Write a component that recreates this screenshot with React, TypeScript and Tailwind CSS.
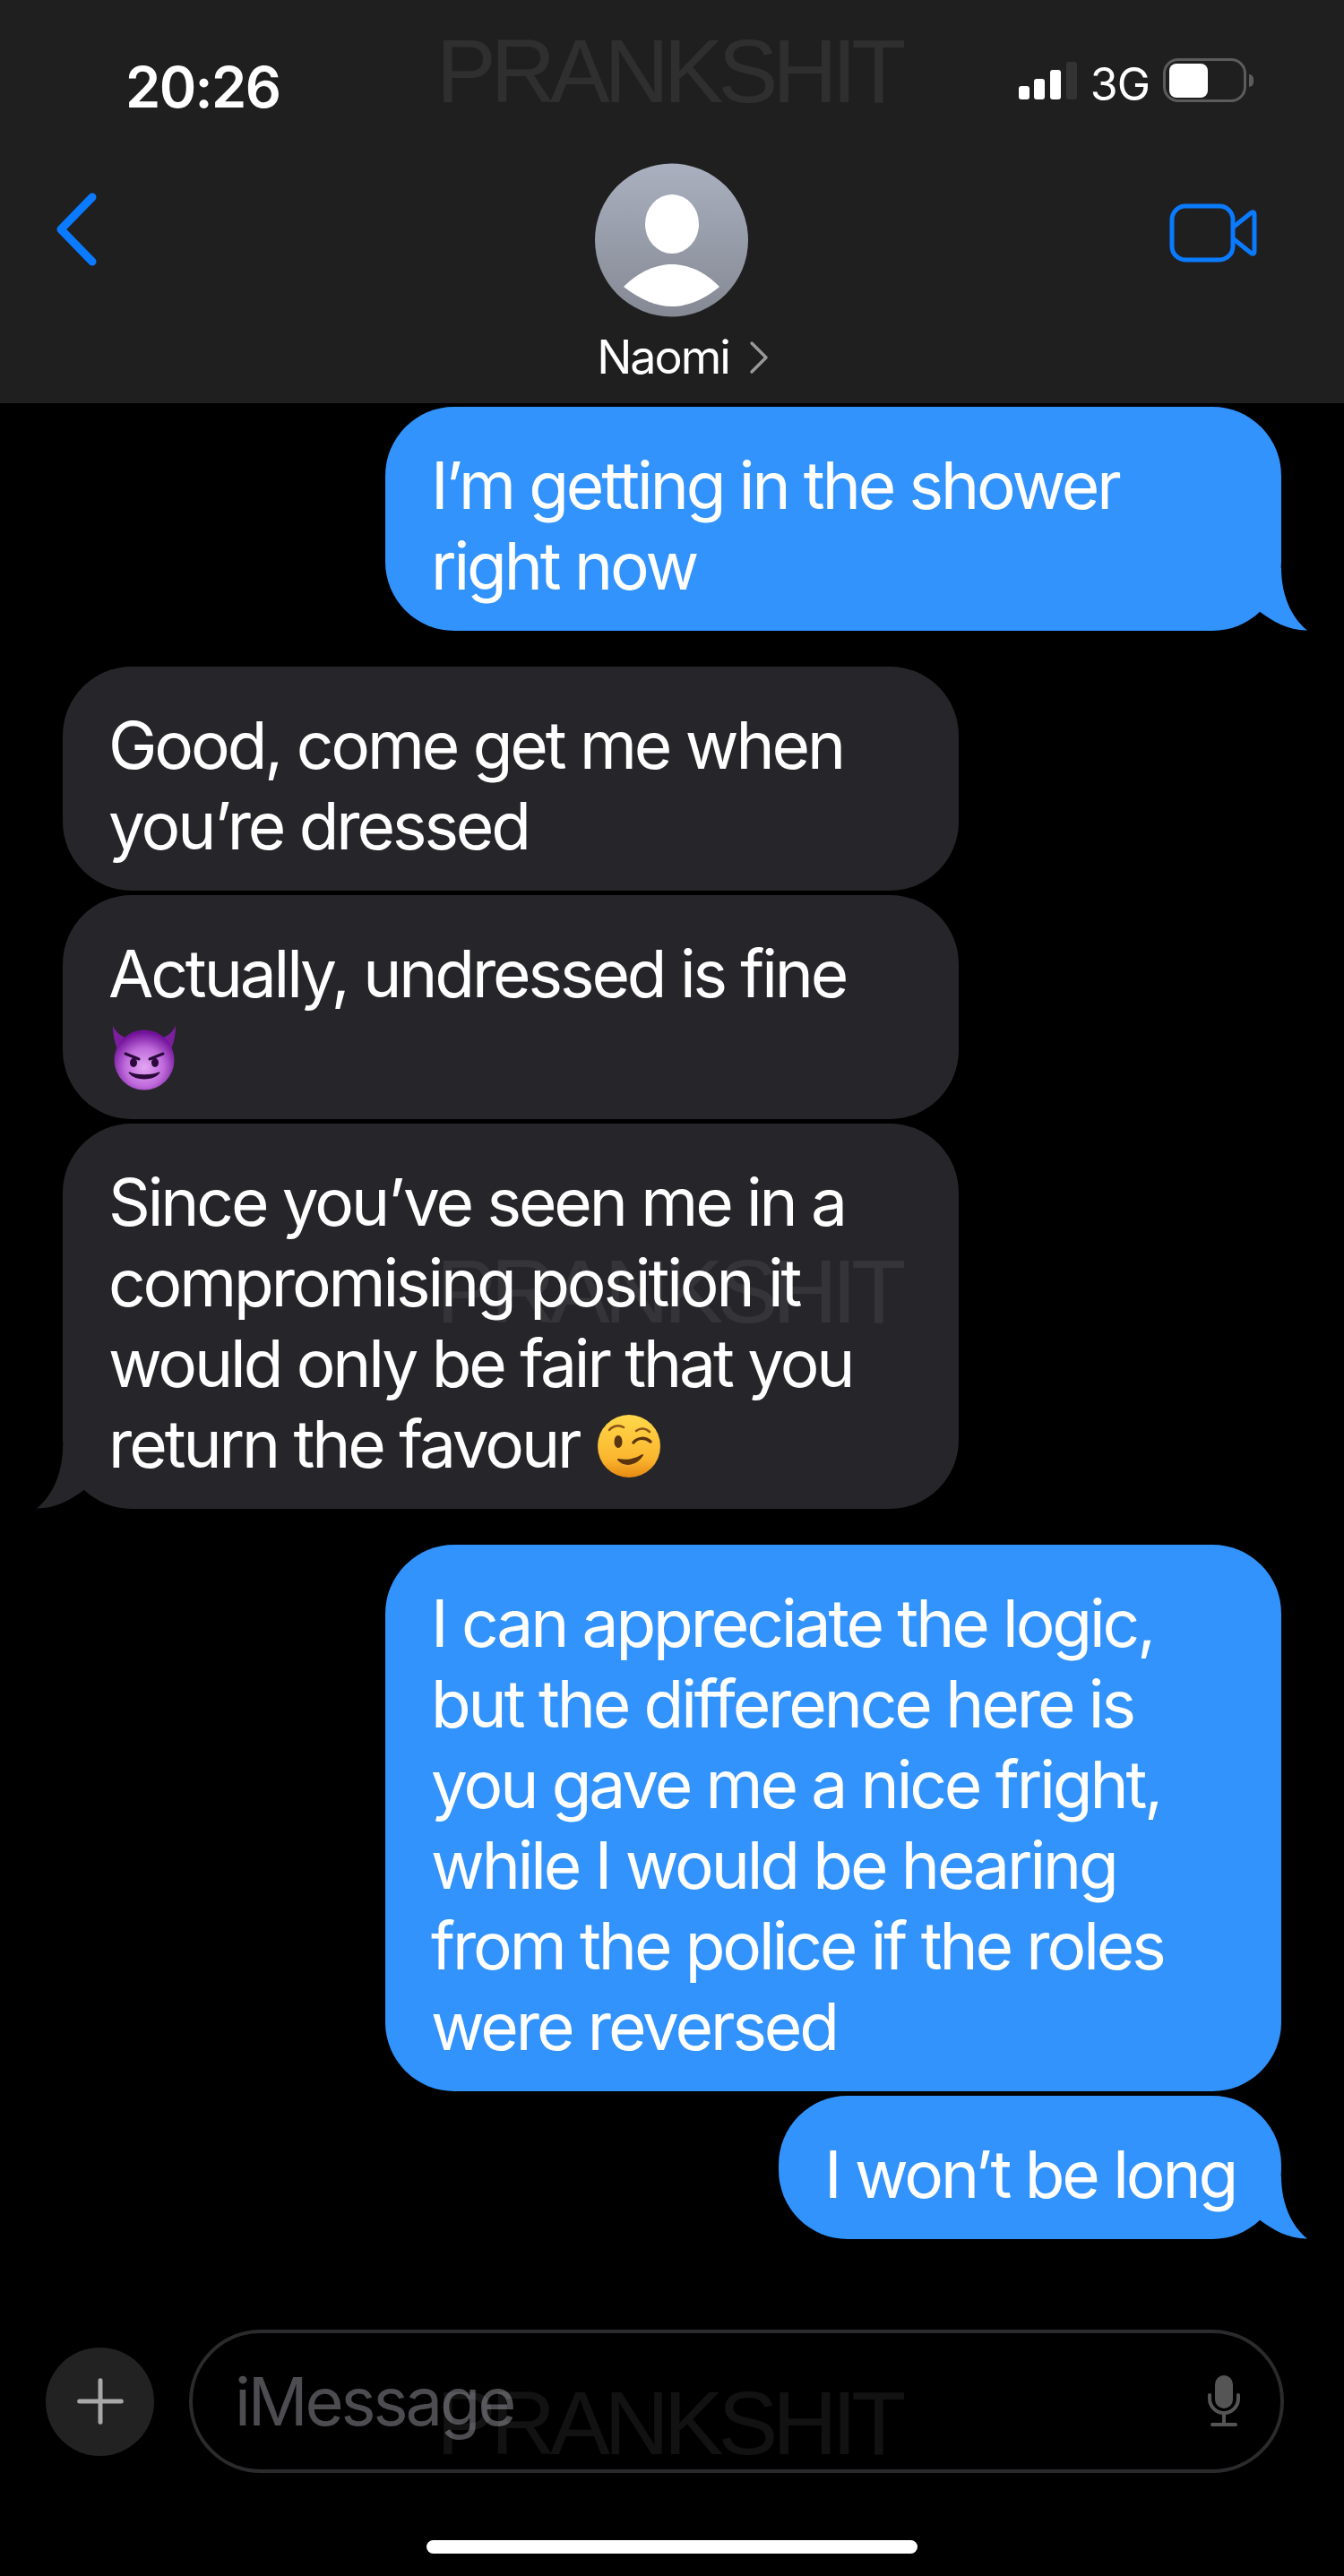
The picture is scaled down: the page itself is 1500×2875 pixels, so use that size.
import type { ReactNode } from 'react';
import { Plus } from 'lucide-react';

const DevilEmoji = () => (
  <svg viewBox="0 0 72 72" className="ml-[4px] inline-block h-[72px] w-[72px] align-[-14px]" aria-hidden="true">
    <defs>
      <radialGradient id="devilFace" cx="50%" cy="62%" r="58%">
        <stop offset="0%" stopColor="#e2a6f2" />
        <stop offset="55%" stopColor="#c06bdc" />
        <stop offset="100%" stopColor="#72129a" />
      </radialGradient>
    </defs>
    <path d="M1 0 C6 10 14 14 22 14 L8 30 C3 20 1 10 1 0 Z" fill="#7c1f9e" />
    <path d="M71 0 C66 10 58 14 50 14 L64 30 C69 20 71 10 71 0 Z" fill="#7c1f9e" />
    <circle cx="36" cy="38" r="33.5" fill="url(#devilFace)" />
    <path d="M15 31 L30 37 M57 31 L42 37" stroke="#2a0a3a" strokeWidth="3" strokeLinecap="round" />
    <ellipse cx="24" cy="41" rx="4" ry="5" fill="#2a0a3a" />
    <ellipse cx="48" cy="41" rx="4" ry="5" fill="#2a0a3a" />
    <path d="M19 52 C27 61 45 61 53 52 C45 56 27 56 19 52 Z" fill="#2a0a3a" stroke="#2a0a3a" strokeWidth="1.5" />
  </svg>
);

const WinkEmoji = () => (
  <svg viewBox="0 0 72 72" className="ml-[2px] inline-block h-[72px] w-[72px] align-[-12px]" aria-hidden="true">
    <defs>
      <linearGradient id="winkFace" x1="0" y1="0" x2="0" y2="1">
        <stop offset="0%" stopColor="#ffd84a" />
        <stop offset="70%" stopColor="#fbb62e" />
        <stop offset="100%" stopColor="#e58a12" />
      </linearGradient>
    </defs>
    <circle cx="36" cy="36" r="35" fill="url(#winkFace)" />
    <ellipse cx="24" cy="31" rx="4.5" ry="7" fill="#5a3310" />
    <path d="M14 18 C18 13 25 12 30 15" fill="none" stroke="#8a5518" strokeWidth="2.5" strokeLinecap="round" />
    <path d="M41 32 C46 26 54 26 60 31" fill="none" stroke="#5a3310" strokeWidth="3.5" strokeLinecap="round" />
    <path d="M44 19 C49 15 55 16 59 20" fill="none" stroke="#8a5518" strokeWidth="2.5" strokeLinecap="round" />
    <path d="M24 51 C32 59 44 57 51 46 C44 51 33 53 24 51 Z" fill="#5a3310" stroke="#5a3310" strokeWidth="2" strokeLinejoin="round" />
  </svg>
);

const SentTail = () => (
  <svg viewBox="0 0 110 70" className="absolute right-[-29px] bottom-0 h-[70px] w-[110px]" aria-hidden="true">
    <path d="M81 0 C81 30 92 55 110 69.5 C90 70 72 60 56 48 L0 0 Z" fill="#3293fd" />
  </svg>
);

const ReceivedTail = () => (
  <svg viewBox="0 0 110 70" className="absolute bottom-0 left-[-29px] h-[70px] w-[110px]" aria-hidden="true">
    <path d="M29 0 C29 30 18 55 0 69.5 C20 70 38 60 54 48 L110 0 Z" fill="#26262a" />
  </svg>
);

interface BubbleProps {
  sent?: boolean;
  tail?: boolean;
  className?: string;
  children: ReactNode;
}

const Bubble = ({ sent, tail, className, children }: BubbleProps) => (
  <div
    className={`relative rounded-[77px] pt-[43px] pr-[40px] pb-[27px] pl-[51px] text-[73px] leading-[90px] tracking-[-3.1px] whitespace-nowrap text-white ${
      sent ? 'mr-[70px] self-end bg-[#3293fd]' : 'ml-[70px] self-start bg-[#26262a]'
    } ${className ?? ''}`}
  >
    {tail && (sent ? <SentTail /> : <ReceivedTail />)}
    <span className="relative">{children}</span>
  </div>
);

const Watermark = ({ className }: { className: string }) => (
  <div
    className={`pointer-events-none absolute left-[487px] font-['Liberation_Sans',sans-serif] text-[100px] leading-[72px] tracking-[-6px] text-white/[0.07] ${className}`}
  >
    PRANKSHIT
  </div>
);

export default function App() {
  return (
    <div className="relative flex h-[2875px] w-[1500px] flex-col overflow-hidden bg-black font-['Inter',sans-serif]">
      <header className="relative h-[450px] shrink-0 bg-[#1f1f1f] px-[62px]">
        <div className="flex items-start justify-between">
          <span className="mt-[58px] ml-[78px] text-[63px] leading-[78px] font-semibold tracking-[-1.6px] text-white">20:26</span>
          <div className="mt-[65px] mr-[47px] flex items-end">
            <svg width="66" height="42" viewBox="0 0 66 42" className="mb-[3px]" aria-hidden="true">
              <rect x="1" y="27" width="12" height="15" rx="3" fill="#fff" />
              <rect x="18" y="19" width="12" height="23" rx="3" fill="#fff" />
              <rect x="36" y="9" width="12" height="33" rx="3" fill="#fff" />
              <rect x="54" y="0" width="12" height="42" rx="3" fill="#333" />
            </svg>
            <span className="mb-[-5px] ml-[15px] text-[50px] leading-[50px] tracking-[-1px] text-white">3G</span>
            <div className="relative ml-[15px] h-[49px] w-[93px] rounded-[17px] border-[3px] border-[#5c5c5c]">
              <div className="mt-[3px] ml-[4px] h-[38px] w-[43px] rounded-[8px] bg-white" />
              <div className="absolute top-[15px] right-[-11px] h-[14px] w-[5px] rounded-r-full bg-[#5c5c5c]" />
            </div>
          </div>
        </div>

        <div className="mt-[6px] flex items-start justify-between">
          <svg width="48" height="82" viewBox="0 0 48 82" className="mt-[73px]" aria-hidden="true">
            <path d="M41 5 L6 41 L41 77" fill="none" stroke="#0a7aff" strokeWidth="9" strokeLinecap="round" strokeLinejoin="round" />
          </svg>
          <svg width="98" height="66" viewBox="0 0 98 66" className="mt-[85px] mr-[35px]" aria-hidden="true">
            <rect x="3" y="3" width="68" height="60" rx="15" fill="none" stroke="#0a7aff" strokeWidth="5" />
            <path d="M72 26 L92 10 Q95 9 95 12 L95 54 Q95 57 92 56 L72 40" fill="none" stroke="#0a7aff" strokeWidth="5" strokeLinejoin="round" />
          </svg>
        </div>

        <div className="absolute inset-x-0 top-[182px] flex flex-col items-center">
          <svg width="172" height="172" viewBox="0 0 172 172" aria-hidden="true">
            <defs>
              <linearGradient id="avatarFill" x1="0" y1="0" x2="0" y2="1">
                <stop offset="0%" stopColor="#aab0bf" />
                <stop offset="100%" stopColor="#858994" />
              </linearGradient>
            </defs>
            <circle cx="85.5" cy="86" r="85.5" fill="url(#avatarFill)" />
            <ellipse cx="86" cy="68" rx="30" ry="33" fill="#fff" />
            <path d="M32 138 C50 120 70 113 86 113 C102 113 122 120 139 138 C122 152 104 160 86 160 C68 160 50 152 32 138 Z" fill="#fff" />
          </svg>
          <div className="mt-[17px] ml-[24px] flex items-center gap-[22px]">
            <span className="text-[52px] leading-[56px] tracking-[-2px] text-white">Naomi</span>
            <svg width="22" height="38" viewBox="0 0 22 38" aria-hidden="true">
              <path d="M3 3 L19 19 L3 35" fill="none" stroke="#999" strokeWidth="3.5" strokeLinecap="round" strokeLinejoin="round" />
            </svg>
          </div>
        </div>
      </header>

      <main className="flex flex-col pt-[4px]">
        <Bubble sent tail className="w-[1000px]">
          I’m getting in the shower
          <br />
          right now
        </Bubble>
        <Bubble className="mt-[40px] w-[1000px]">
          Good, come get me when
          <br />
          you’re dressed
        </Bubble>
        <Bubble className="mt-[5px] w-[1000px]">
          Actually, undressed is fine
          <br />
          <DevilEmoji />
        </Bubble>
        <Bubble tail className="mt-[5px] w-[1000px]">
          Since you’ve seen me in a
          <br />
          compromising position it
          <br />
          would only be fair that you
          <br />
          return the favour <WinkEmoji />
        </Bubble>
        <Bubble sent className="mt-[40px] w-[1000px]">
          I can appreciate the logic,
          <br />
          but the difference here is
          <br />
          you gave me a nice fright,
          <br />
          while I would be hearing
          <br />
          from the police if the roles
          <br />
          were reversed
        </Bubble>
        <Bubble sent tail className="mt-[5px] w-[561px]">
          I won’t be long
        </Bubble>
      </main>

      <div className="mt-[101px] flex items-center pl-[51px]">
        <div className="flex h-[121px] w-[121px] items-center justify-center rounded-full bg-[#232223]">
          <Plus size={80} strokeWidth={1.5} color="#a8a8a8" />
        </div>
        <div className="ml-[39px] flex h-[160px] w-[1222px] items-center justify-between rounded-[80px] border-[4px] border-[#2b2b2d] pr-[44px] pl-[47px]">
          <span className="text-[74px] leading-[90px] tracking-[-3.1px] text-[#4d4d51]">iMessage</span>
          <svg width="38" height="58" viewBox="0 0 38 58" aria-hidden="true">
            <rect x="9" y="0" width="20" height="37" rx="10" fill="#555" />
            <path d="M3 22 V26 A16 16 0 0 0 35 26 V22" fill="none" stroke="#555" strokeWidth="4" strokeLinecap="round" />
            <path d="M19 42 V54 M6 55 H32" fill="none" stroke="#555" strokeWidth="4" strokeLinecap="round" />
          </svg>
        </div>
      </div>

      <div className="mx-auto mt-[75px] h-[15px] w-[548px] rounded-full bg-white" />

      <Watermark className="top-[43px]" />
      <Watermark className="top-[1405px]" />
      <Watermark className="top-[2668px]" />
    </div>
  );
}
